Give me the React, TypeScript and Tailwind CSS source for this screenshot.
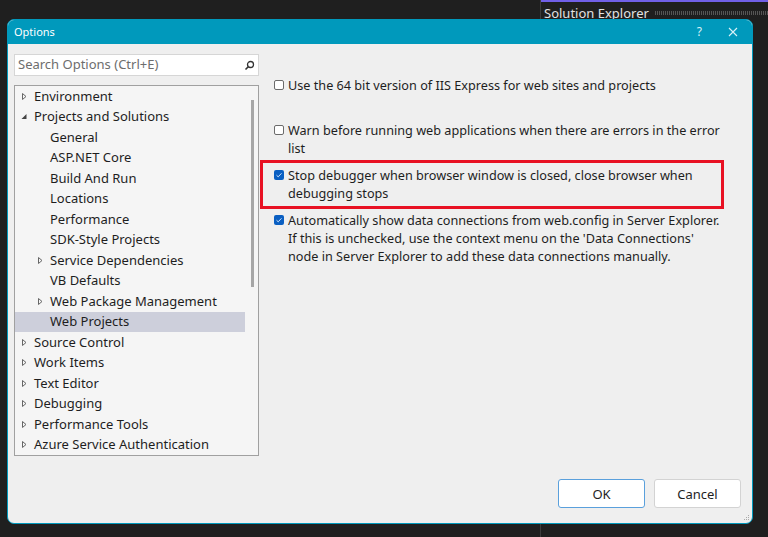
import React from 'react';

type Node = { label: string; level: 0 | 1; arrow?: 'closed' | 'open'; selected?: boolean };

const tree: Node[] = [
  { label: 'Environment', level: 0, arrow: 'closed' },
  { label: 'Projects and Solutions', level: 0, arrow: 'open' },
  { label: 'General', level: 1 },
  { label: 'ASP.NET Core', level: 1 },
  { label: 'Build And Run', level: 1 },
  { label: 'Locations', level: 1 },
  { label: 'Performance', level: 1 },
  { label: 'SDK-Style Projects', level: 1 },
  { label: 'Service Dependencies', level: 1, arrow: 'closed' },
  { label: 'VB Defaults', level: 1 },
  { label: 'Web Package Management', level: 1, arrow: 'closed' },
  { label: 'Web Projects', level: 1, selected: true },
  { label: 'Source Control', level: 0, arrow: 'closed' },
  { label: 'Work Items', level: 0, arrow: 'closed' },
  { label: 'Text Editor', level: 0, arrow: 'closed' },
  { label: 'Debugging', level: 0, arrow: 'closed' },
  { label: 'Performance Tools', level: 0, arrow: 'closed' },
  { label: 'Azure Service Authentication', level: 0, arrow: 'closed' },
];

const Arrow = ({ kind }: { kind?: 'closed' | 'open' }) => {
  if (!kind) return <span className="w-[11px] shrink-0" />;
  return (
    <svg width="11" height="11" viewBox="0 0 11 11" className="shrink-0">
      {kind === 'closed' ? (
        <path d="M3.5 2.5 L7 5.5 L3.5 8.5 Z" fill="none" stroke="#666" strokeWidth="1" />
      ) : (
        <path d="M7.5 3 L7.5 8 L2.5 8 Z" fill="#444" />
      )}
    </svg>
  );
};

const Check = ({ checked }: { checked?: boolean }) =>
  checked ? (
    <span className="mt-[4px] mr-[4px] flex h-[10px] w-[10px] shrink-0 items-center justify-center rounded-[2px] bg-[#0a5fc2]">
      <svg width="8" height="8" viewBox="0 0 8 8">
        <path d="M1.5 4.2 L3.2 5.8 L6.5 2.3" fill="none" stroke="#cfe3fb" strokeWidth="1" />
      </svg>
    </span>
  ) : (
    <span className="mt-[4px] mr-[4px] h-[10px] w-[10px] shrink-0 rounded-[2px] border border-[#6b6b6b] bg-white" />
  );

export default function App() {
  return (
    <div className="relative h-[537px] w-[768px] overflow-hidden bg-[#1f1f1f] font-['Noto_Sans',sans-serif] text-[13px] text-[#1e1e1e]">
      {/* Solution Explorer behind */}
      <div className="absolute left-[540px] top-0 h-[537px] w-[228px] border-l border-[#3c3c3c]">
        <div className="h-[2px] bg-[#7160e8]" />
        <div className="flex items-center gap-[6px] pl-[3px] pt-[1px]">
          <span className="text-[13px] leading-[20px] text-[#e2e2e2]">Solution Explorer</span>
          <span className="h-[4px] flex-1 bg-[repeating-linear-gradient(90deg,#555_0_1px,transparent_1px_2px)]" />
        </div>
      </div>

      {/* Options dialog */}
      <div className="absolute left-[7px] top-[19px] flex h-[505px] w-[746px] flex-col overflow-hidden rounded-[7px] border border-[#0099bc] bg-[#efefef]">
        <div className="flex h-[24px] shrink-0 items-center bg-[#0099bc] pl-[6px] pr-[14px] text-white">
          <span className="flex-1 text-[11px]">Options</span>
          <span className="mr-[26px] text-[12px] text-[#d8f1f7]">?</span>
          <svg width="10" height="10" viewBox="0 0 10 10">
            <path d="M1 1 L9 9 M9 1 L1 9" stroke="#d8f1f7" strokeWidth="1.1" />
          </svg>
        </div>

        <div className="flex flex-1">
          {/* left column */}
          <div className="ml-[6px] mt-[10px] flex w-[245px] flex-col">
            <div className="flex h-[22px] items-center border border-[#d6d6d6] bg-white pl-[3px] pr-[3px]">
              <span className="flex-1 text-[#6d6d6d]">Search Options (Ctrl+E)</span>
              <svg width="11" height="11" viewBox="0 0 11 11">
                <circle cx="6.5" cy="4.5" r="3" fill="none" stroke="#333" strokeWidth="1.3" />
                <path d="M4.3 6.7 L1.5 9.5" stroke="#333" strokeWidth="1.6" />
              </svg>
            </div>
            <div className="mt-[9px] flex h-[371px] border border-[#a0a0a0] bg-[#f5f5f5]">
              <div className="flex-1">
                {tree.map((n) => (
                  <div
                    key={n.label}
                    className={`flex h-[20.5px] items-center ${n.level === 0 ? 'pl-[4px]' : 'pl-[20px]'} ${n.selected ? 'bg-[#cdcfdb]' : ''}`}
                  >
                    <Arrow kind={n.arrow} />
                    <span className="ml-[4px] whitespace-nowrap">{n.label}</span>
                  </div>
                ))}
              </div>
              <div className="flex w-[13px] justify-center pt-[14px]">
                <div className="ml-[1px] h-[187px] w-[3px] bg-[#a6a6a6]" />
              </div>
            </div>
          </div>

          {/* right column */}
          <div className="ml-[1px] flex w-[464px] flex-col pt-[32px] text-[12.66px] leading-[18px]">
            <div className="flex pl-[14px]">
              <Check />
              <span>Use the 64 bit version of IIS Express for web sites and projects</span>
            </div>
            <div className="mr-[-6px] mt-[27px] flex pl-[14px]">
              <Check />
              <span>Warn before running web applications when there are errors in the error list</span>
            </div>
            <div className="mt-[3px] flex border-[3px] border-[#e81123] pb-[4px] pl-[11px] pr-[24px] pt-[3px]">
              <Check checked />
              <span>Stop debugger when browser window is closed, close browser when debugging stops</span>
            </div>
            <div className="mt-[2px] flex pl-[14px]">
              <Check checked />
              <span>
                Automatically show data connections from web.config in Server Explorer. If this is unchecked, use the
                context menu on the 'Data Connections' node in Server Explorer to add these data connections manually.
              </span>
            </div>
            <div className="flex-1" />
            <div className="mb-[15px] mr-[-17px] flex justify-end gap-[9px]">
              <button className="h-[29px] w-[87px] rounded-[3px] border border-[#5aa0dc] bg-white text-[13px]">OK</button>
              <button className="h-[29px] w-[87px] rounded-[3px] border border-[#d3d3d3] bg-white text-[13px]">Cancel</button>
            </div>
          </div>
        </div>
        <svg width="6" height="6" viewBox="0 0 6 6" className="absolute bottom-[2px] right-[2px]">
          <rect x="4" y="0" width="1" height="1" fill="#aaa" />
          <rect x="2" y="2" width="1" height="1" fill="#aaa" />
          <rect x="4" y="2" width="1" height="1" fill="#aaa" />
          <rect x="0" y="4" width="1" height="1" fill="#aaa" />
          <rect x="2" y="4" width="1" height="1" fill="#aaa" />
          <rect x="4" y="4" width="1" height="1" fill="#aaa" />
        </svg>
      </div>
    </div>
  );
}
